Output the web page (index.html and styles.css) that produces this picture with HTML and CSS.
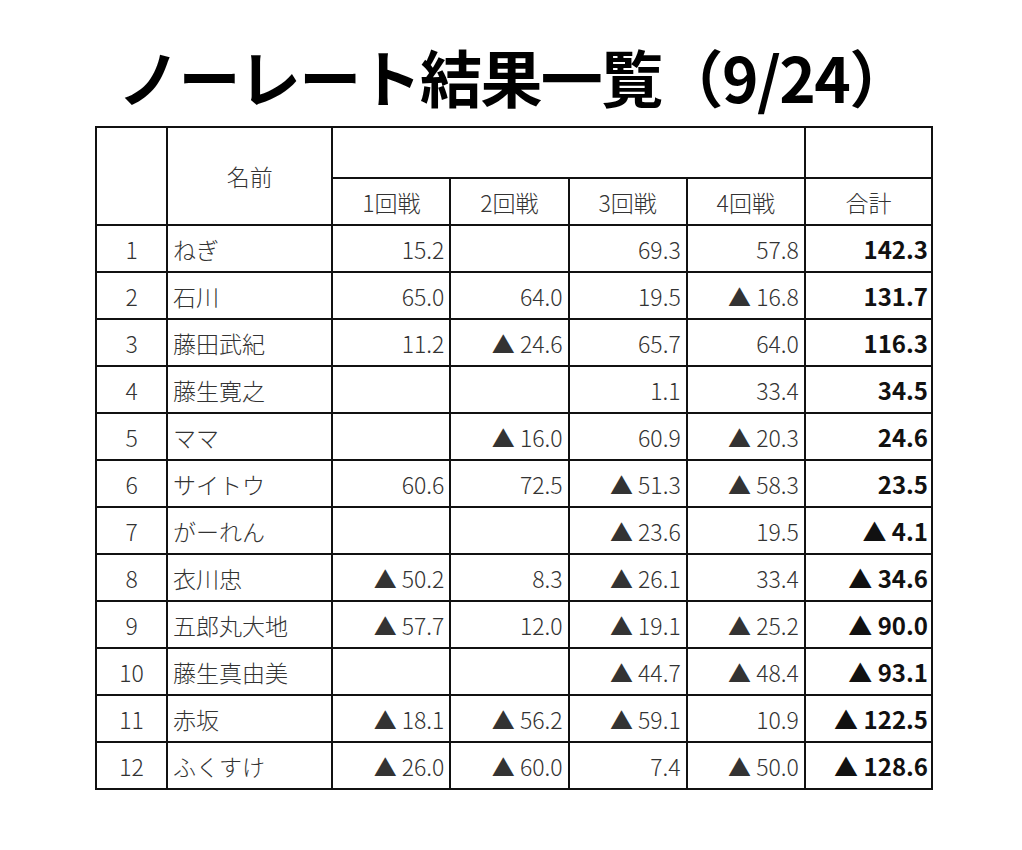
FILE: index.html
```html
<!DOCTYPE html>
<html lang="ja">
<head>
<meta charset="utf-8">
<link rel="stylesheet" href="styles.css">
</head>
<body>
<div class="page">
  <h1 class="title">ノーレート結果一覧（9/24）</h1>
  <table class="results">
    <colgroup>
      <col class="c-num"><col class="c-name"><col class="c-r"><col class="c-r"><col class="c-r"><col class="c-r"><col class="c-total">
    </colgroup>
    <thead>
      <tr class="h1">
        <th rowspan="2"></th>
        <th rowspan="2">名前</th>
        <th colspan="4"></th>
        <th></th>
      </tr>
      <tr class="h2">
        <th>1回戦</th><th>2回戦</th><th>3回戦</th><th>4回戦</th><th>合計</th>
      </tr>
    </thead>
    <tbody>
      <tr><td class="num">1</td><td class="name">ねぎ</td><td>15.2</td><td></td><td>69.3</td><td>57.8</td><td class="total">142.3</td></tr>
      <tr><td class="num">2</td><td class="name">石川</td><td>65.0</td><td>64.0</td><td>19.5</td><td>▲ 16.8</td><td class="total">131.7</td></tr>
      <tr><td class="num">3</td><td class="name">藤田武紀</td><td>11.2</td><td>▲ 24.6</td><td>65.7</td><td>64.0</td><td class="total">116.3</td></tr>
      <tr><td class="num">4</td><td class="name">藤生寛之</td><td></td><td></td><td>1.1</td><td>33.4</td><td class="total">34.5</td></tr>
      <tr><td class="num">5</td><td class="name">ママ</td><td></td><td>▲ 16.0</td><td>60.9</td><td>▲ 20.3</td><td class="total">24.6</td></tr>
      <tr><td class="num">6</td><td class="name">サイトウ</td><td>60.6</td><td>72.5</td><td>▲ 51.3</td><td>▲ 58.3</td><td class="total">23.5</td></tr>
      <tr><td class="num">7</td><td class="name">がーれん</td><td></td><td></td><td>▲ 23.6</td><td>19.5</td><td class="total">▲ 4.1</td></tr>
      <tr><td class="num">8</td><td class="name">衣川忠</td><td>▲ 50.2</td><td>8.3</td><td>▲ 26.1</td><td>33.4</td><td class="total">▲ 34.6</td></tr>
      <tr><td class="num">9</td><td class="name">五郎丸大地</td><td>▲ 57.7</td><td>12.0</td><td>▲ 19.1</td><td>▲ 25.2</td><td class="total">▲ 90.0</td></tr>
      <tr><td class="num">10</td><td class="name">藤生真由美</td><td></td><td></td><td>▲ 44.7</td><td>▲ 48.4</td><td class="total">▲ 93.1</td></tr>
      <tr><td class="num">11</td><td class="name">赤坂</td><td>▲ 18.1</td><td>▲ 56.2</td><td>▲ 59.1</td><td>10.9</td><td class="total">▲ 122.5</td></tr>
      <tr><td class="num">12</td><td class="name">ふくすけ</td><td>▲ 26.0</td><td>▲ 60.0</td><td>7.4</td><td>▲ 50.0</td><td class="total">▲ 128.6</td></tr>
    </tbody>
  </table>
</div>
</body>
</html>
```
FILE: styles.css
```css
html, body {
  margin: 0;
  padding: 0;
  background: #fff;
}
.page {
  width: 1022px;
  padding-top: 44px;
  display: flex;
  flex-direction: column;
  align-items: flex-start;
  font-family: "Noto Sans CJK JP", "Noto Sans", sans-serif;
}
.title {
  margin: 0 0 18px 118px;
  font-size: 62px;
  line-height: 64px;
  font-weight: 700;
  color: #000;
  letter-spacing: -1.6px;
  white-space: nowrap;
}
.results {
  margin-left: 95px;
  border-collapse: collapse;
  table-layout: fixed;
  width: 838px;
  color: #333;
  font-size: 23px;
  font-weight: 300;
}
.c-num { width: 71px; }
.c-name { width: 165px; }
.c-r { width: 118px; }
.c-total { width: 127px; }
.results th, .results td {
  border: 2px solid #111;
  padding: 0 5px;
  line-height: 26px;
}
.results th {
  font-weight: 300;
  text-align: center;
}
.h1 th { height: 49px; }
.h2 th { height: 45px; }
.results td {
  height: 45px;
  text-align: right;
}
.results td.num { text-align: center; }
.results td.name { text-align: left; padding-left: 5px; }
.results td.total { font-size: 24px; font-weight: 700; color: #111; padding-right: 3px; }
```
